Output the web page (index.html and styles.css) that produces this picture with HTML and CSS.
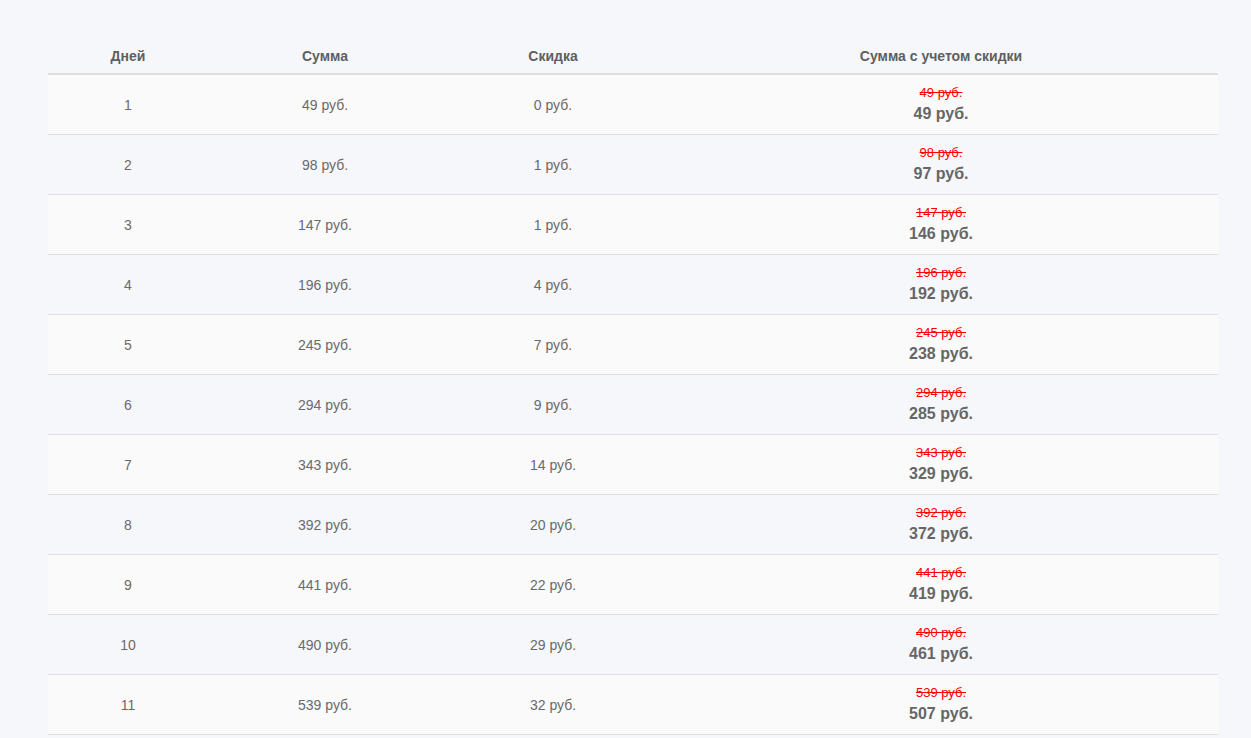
FILE: index.html
```html
<!DOCTYPE html>
<html lang="ru">
<head>
<meta charset="utf-8">
<link rel="stylesheet" href="styles.css">
</head>
<body>
<div class="wrap">
<table class="prices">
<colgroup><col class="c1"><col class="c2"><col class="c3"><col class="c4"></colgroup>
<thead>
<tr><th>Дней</th><th>Сумма</th><th>Скидка</th><th>Сумма с учетом скидки</th></tr>
</thead>
<tbody>
<tr><td>1</td><td>49 руб.</td><td>0 руб.</td><td><div class="old">49 руб.</div><div class="new">49 руб.</div></td></tr>
<tr><td>2</td><td>98 руб.</td><td>1 руб.</td><td><div class="old">98 руб.</div><div class="new">97 руб.</div></td></tr>
<tr><td>3</td><td>147 руб.</td><td>1 руб.</td><td><div class="old">147 руб.</div><div class="new">146 руб.</div></td></tr>
<tr><td>4</td><td>196 руб.</td><td>4 руб.</td><td><div class="old">196 руб.</div><div class="new">192 руб.</div></td></tr>
<tr><td>5</td><td>245 руб.</td><td>7 руб.</td><td><div class="old">245 руб.</div><div class="new">238 руб.</div></td></tr>
<tr><td>6</td><td>294 руб.</td><td>9 руб.</td><td><div class="old">294 руб.</div><div class="new">285 руб.</div></td></tr>
<tr><td>7</td><td>343 руб.</td><td>14 руб.</td><td><div class="old">343 руб.</div><div class="new">329 руб.</div></td></tr>
<tr><td>8</td><td>392 руб.</td><td>20 руб.</td><td><div class="old">392 руб.</div><div class="new">372 руб.</div></td></tr>
<tr><td>9</td><td>441 руб.</td><td>22 руб.</td><td><div class="old">441 руб.</div><div class="new">419 руб.</div></td></tr>
<tr><td>10</td><td>490 руб.</td><td>29 руб.</td><td><div class="old">490 руб.</div><div class="new">461 руб.</div></td></tr>
<tr><td>11</td><td>539 руб.</td><td>32 руб.</td><td><div class="old">539 руб.</div><div class="new">507 руб.</div></td></tr>
</tbody>
</table>
</div>
</body>
</html>
```
FILE: styles.css
```css
html, body {
  margin: 0;
  padding: 0;
  background: #f6f7fa;
}
body {
  font-family: "Liberation Sans", Arial, sans-serif;
  color: #6a6a6a;
}
.wrap {
  padding: 39px 33px 0 48px;
}
.prices {
  width: 1170px;
  border-collapse: collapse;
  table-layout: fixed;
}
.c1 { width: 160px; }
.c2 { width: 234px; }
.c3 { width: 222px; }
.prices th {
  font-size: 14px;
  font-weight: bold;
  color: #5f5f5f;
  height: 34px;
  padding: 0;
  text-align: center;
  vertical-align: middle;
  border-bottom: 2px solid #dedede;
}
.prices td {
  font-size: 14px;
  text-align: center;
  vertical-align: middle;
  height: 59px;
  padding: 0;
  border-bottom: 1px solid #dedede;
}
.prices tbody tr:nth-child(odd) {
  background: #fafafa;
}
.old {
  font-size: 13px;
  color: #ff0000;
  text-decoration: line-through;
  line-height: 18px;
}
.new {
  font-size: 16px;
  font-weight: bold;
  color: #666;
  line-height: 23px;
}
```
